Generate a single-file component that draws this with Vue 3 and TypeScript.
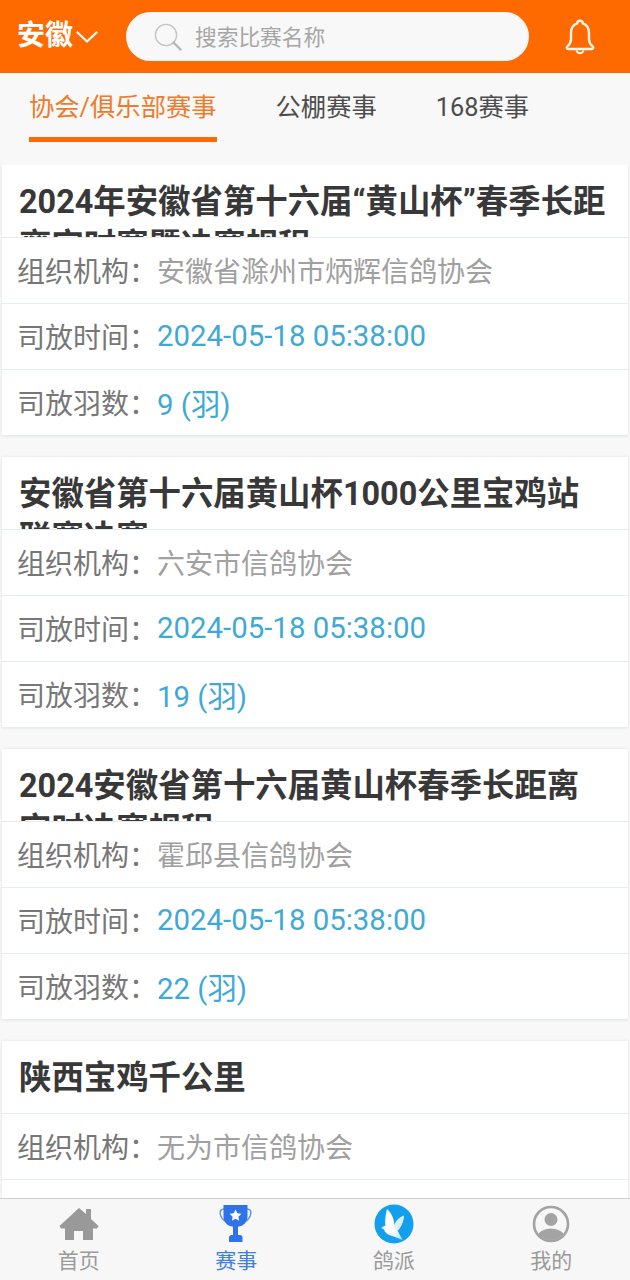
<template>
  <div class="page">
    <header class="top">
      <div class="city">
        <span>安徽</span>
        <svg class="chevron" viewBox="0 0 22 12" width="22" height="12"><path d="M1.500 1.500 11 10.500l9.500-9" fill="none" stroke="#fff" stroke-width="2.200" stroke-linecap="round" stroke-linejoin="round" /></svg>
      </div>
      <div class="search">
        <svg viewBox="0 0 28 28" width="28" height="28"><circle cx="12" cy="12" r="10.600" fill="none" stroke="#c4c4c4" stroke-width="1.400" /><path d="M19.500 19.500 26.500 26.500" stroke="#b4b4b4" stroke-width="2.400" stroke-linecap="round" /></svg>
        <span>搜索比赛名称</span>
      </div>
      <svg class="bell" viewBox="0 0 30 36" width="30" height="36"><path d="M15 1.800c-1.700 0-2.700 1.100-2.800 2.600C8 5.800 6 9.500 6 14v6.500c0 3-1.600 5-3.700 7-1 1-.5 2.500.9 2.500h23.600c1.400 0 1.900-1.500.9-2.500-2.100-2-3.700-4-3.700-7V14c0-4.500-2-8.200-6.200-9.600C17.700 2.900 16.700 1.800 15 1.800Z" fill="none" stroke="#fff6ea" stroke-width="2.400" stroke-linejoin="round" /><path d="M11.500 31.500c.5 1.700 1.800 2.700 3.500 2.700s3-1 3.500-2.700" fill="none" stroke="#fff6ea" stroke-width="2" /></svg>
    </header>

    <nav class="tabs">
      <span v-for="(tab, i) in tabs" :key="tab" class="tab" :class="{ active: i === 0 }">{{ tab }}</span>
    </nav>

    <main class="list">
      <section v-for="race in races" :key="race.title" class="card">
        <h2 class="title">{{ race.title }}</h2>
        <div class="row">
          <span class="label">组织机构：</span>
          <span class="org">{{ race.org }}</span>
        </div>
        <div class="row">
          <span class="label">司放时间：</span>
          <span class="value">{{ race.time }}</span>
        </div>
        <div class="row">
          <span class="label">司放羽数：</span>
          <span class="value">{{ race.count }} (羽)</span>
        </div>
      </section>
    </main>

    <footer class="bottom">
      <div class="item">
        <div class="icon">
          <svg viewBox="0 0 40 34" width="40" height="34"><path d="M20 1 27 7V2h5v10l7.500 7-1.500 2.500h-4V33H24v-9h-9v9H6V21.500H2L.5 19Z" fill="#999" /></svg>
        </div>
        <span>首页</span>
      </div>
      <div class="item on">
        <div class="icon">
          <svg viewBox="0 0 34 38" width="34" height="38"><path d="M5 4C2 4 .8 6 1.200 8.500 1.800 12.500 4 15.500 8 17M28 4c3 0 4.200 2 3.800 4.500C31.200 12.500 29 15.500 25 17" fill="none" stroke="#5f93e4" stroke-width="1.500" /><path d="M4.500 0h24v11.500c0 5.500-4 9.500-9.500 10.300V30h2c1.500 0 2.500 1 2.500 2.500V37H10v-4.500C10 31 11 30 12.500 30H14v-8.200C8.500 21 4.500 17 4.500 11.500Z" fill="#2f73e8" /><path d="m16.500 4.500 1.800 3.700 4.100.6-3 2.900.7 4-3.600-1.900-3.600 1.900.7-4-3-2.900 4.100-.6Z" fill="#fff" /></svg>
        </div>
        <span>赛事</span>
      </div>
      <div class="item">
        <div class="icon">
          <svg viewBox="0 0 40 40" width="40" height="40">
            <defs>
              <linearGradient id="dove" x1="0" y1="0" x2="1" y2="1">
                <stop offset="0" stop-color="#ffffff" />
                <stop offset="0.55" stop-color="#f2fafe" />
                <stop offset="1" stop-color="#a9dcf7" />
              </linearGradient>
            </defs>
            <circle cx="20" cy="20" r="19.500" fill="#12a0ee" />
            <path d="M30 11.500C25 13 20.500 18 19 24l5 2.500c3.500-4 6-9.500 6-15Z" fill="#d8effb" />
            <path d="M13 5c-1.200 5-2.500 11-1.500 18h8.500c1-7-2.500-14-7-18Z" fill="#fff" />
            <path d="M7.500 24c2-2.500 5.500-2.500 9-2.500 4 .7 6.500 3.500 7.500 6l4.500 8.500-7.500-3c-4.500-1.500-10-3-11-7.500Z" fill="url(#dove)" />
          </svg>
        </div>
        <span>鸽派</span>
      </div>
      <div class="item">
        <div class="icon">
          <svg viewBox="0 0 38 38" width="38" height="38"><clipPath id="face"><circle cx="19" cy="19" r="16" /></clipPath><circle cx="19" cy="19" r="17" fill="none" stroke="#a3a3a3" stroke-width="2.600" /><circle cx="19" cy="14.500" r="6.500" fill="#a3a3a3" /><ellipse cx="19" cy="33" rx="14" ry="9.500" fill="#a3a3a3" clip-path="url(#face)" /></svg>
        </div>
        <span>我的</span>
      </div>
    </footer>
  </div>
</template>

<script setup lang="ts">
interface Race {
  title: string
  org: string
  time: string
  count: number
}

const tabs = ['协会/俱乐部赛事', '公棚赛事', '168赛事']

const races: Race[] = [
  {
    title: '2024年安徽省第十六届“黄山杯”春季长距离定时赛暨决赛规程',
    org: '安徽省滁州市炳辉信鸽协会',
    time: '2024-05-18 05:38:00',
    count: 9,
  },
  {
    title: '安徽省第十六届黄山杯1000公里宝鸡站联赛决赛',
    org: '六安市信鸽协会',
    time: '2024-05-18 05:38:00',
    count: 19,
  },
  {
    title: '2024安徽省第十六届黄山杯春季长距离定时决赛规程',
    org: '霍邱县信鸽协会',
    time: '2024-05-18 05:38:00',
    count: 22,
  },
  {
    title: '陕西宝鸡千公里',
    org: '无为市信鸽协会',
    time: '2024-05-18 05:38:00',
    count: 16,
  },
]
</script>

<style>
html,
body {
  margin: 0;
  background: #f8f8f8;
}
</style>

<style scoped>
.page {
  height: 1280px;
  display: flex;
  flex-direction: column;
  overflow: hidden;
  background: #f8f8f8;
  font-family: Roboto, "Noto Sans CJK SC", sans-serif;
}

.top {
  height: 73px;
  flex: none;
  display: flex;
  align-items: center;
  background: #ff6a00;
  padding-left: 17px;
  box-sizing: border-box;
}

.city {
  width: 109px;
  display: flex;
  align-items: center;
  gap: 3px;
  color: #fff;
  font-size: 28px;
  font-weight: 700;
  line-height: 36px;
  padding-bottom: 2px;
}

.chevron {
  margin-top: 2px;
}

.search {
  width: 403px;
  height: 49px;
  display: flex;
  align-items: center;
  gap: 13px;
  padding-left: 28px;
  box-sizing: border-box;
  border-radius: 25px;
  background: #f8f8f8;
  color: #a6a6a6;
  font-size: 21.7px;
}

.search span {
  margin-top: -3px;
}

.bell {
  margin-left: 36px;
}

.tabs {
  flex: none;
  display: flex;
  gap: 59px;
  height: 69px;
  padding-left: 29px;
  box-sizing: border-box;
  margin-bottom: 23px;
}

.tab {
  height: 69px;
  box-sizing: border-box;
  line-height: 70px;
  font-size: 25.3px;
  color: #4d4d4d;
}

.tab.active {
  color: #ee7b2c;
  border-bottom: 5px solid #ff6a00;
}

.list {
  flex: 1;
  min-height: 0;
  overflow: hidden;
  padding: 0 2px;
}

.card {
  background: #fff;
  margin-bottom: 21px;
  box-shadow: 0 0 3px rgba(0, 0, 0, 0.1);
}

.title {
  height: 73px;
  margin: 0;
  padding: 15px 19px 0 17px;
  box-sizing: border-box;
  overflow: hidden;
  font-size: 32.4px;
  line-height: 44px;
  font-weight: 700;
  color: #383838;
  border-bottom: 1px solid #e4edf1;
}

.row {
  height: 66px;
  display: flex;
  align-items: center;
  padding: 0 0 2px 15px;
  box-sizing: border-box;
  border-bottom: 1px solid #e4edf1;
  font-size: 28px;
}

.label {
  color: #777;
}

.org {
  color: #a0a0a0;
}

.value {
  color: #3fa9d6;
  font-size: 29.4px;
}

.bottom {
  flex: none;
  height: 82px;
  display: grid;
  grid-template-columns: repeat(4, 1fr);
  background: #f7f7f7;
  border-top: 1px solid #cfcfcf;
  box-sizing: border-box;
  padding-top: 5px;
}

.item {
  display: flex;
  flex-direction: column;
  align-items: center;
  font-size: 21px;
  line-height: 30px;
  color: #9a9a9a;
}

.icon {
  height: 40px;
  display: flex;
  align-items: center;
  justify-content: center;
  margin-bottom: 2px;
}

.item.on {
  color: #3f7fe0;
}
</style>
